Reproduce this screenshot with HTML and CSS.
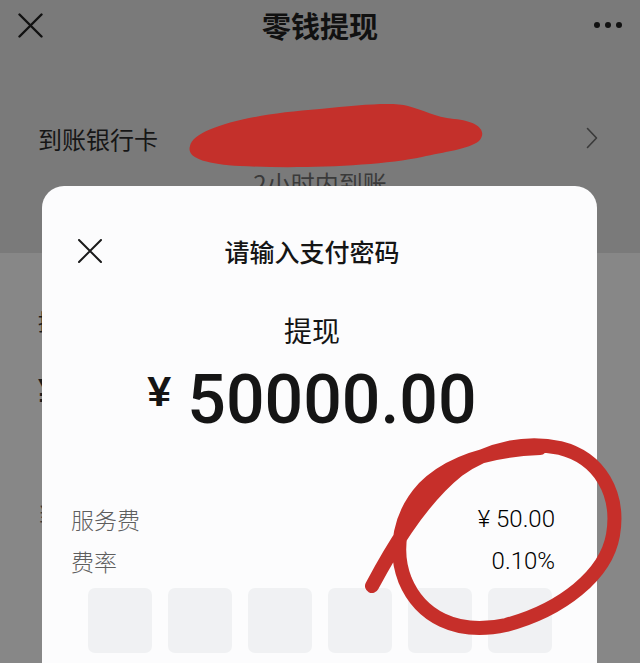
FILE: index.html
```html
<!DOCTYPE html>
<html lang="zh-CN">
<head>
<meta charset="utf-8">
<title>零钱提现</title>
<link rel="stylesheet" href="styles.css">
</head>
<body>
<div class="screen">
  <header class="nav">
    <svg class="nav-close" width="25" height="25" viewBox="0 0 25 25"><path d="M1.5 1.5 L23.5 23.5 M23.5 1.5 L1.5 23.5" stroke="#111" stroke-width="2.4" stroke-linecap="round" fill="none"/></svg>
    <h1 class="nav-title">零钱提现</h1>
    <svg class="nav-more" width="28" height="8" viewBox="0 0 28 8"><circle cx="3" cy="4" r="3" fill="#111"/><circle cx="14" cy="4" r="3" fill="#111"/><circle cx="25" cy="4" r="3" fill="#111"/></svg>
  </header>

  <section class="bank">
    <div class="bank-row">
      <span class="bank-label">到账银行卡</span>
      <svg class="bank-chevron" width="12" height="22" viewBox="0 0 12 22"><path d="M1.5 1.5 L10.5 11 L1.5 20.5" stroke="#3a3a3a" stroke-width="1.6" fill="none" stroke-linecap="round" stroke-linejoin="round"/></svg>
    </div>
    <div class="bank-eta">2小时内到账</div>
  </section>

  <section class="form">
    <div class="form-label">提</div>
    <div class="form-amount">¥</div>
    <div class="form-balance">当</div>
  </section>

  <div class="dialog">
    <div class="dialog-head">
      <svg class="dialog-close" width="24" height="24" viewBox="0 0 24 24"><path d="M1 1 L23 23 M23 1 L1 23" stroke="#1a1a1a" stroke-width="2" stroke-linecap="round" fill="none"/></svg>
      <div class="dialog-title">请输入支付密码</div>
      <span></span>
    </div>
    <div class="dialog-kind">提现</div>
    <div class="dialog-amount"><span class="dialog-yen">¥</span><span class="dialog-num">50000.00</span></div>
    <div class="fees">
      <div class="fee-row"><span class="fee-key">服务费</span><span class="fee-val">¥ 50.00</span></div>
      <div class="fee-row"><span class="fee-key">费率</span><span class="fee-val">0.10%</span></div>
    </div>
    <div class="pin">
      <div class="pin-box"></div><div class="pin-box"></div><div class="pin-box"></div>
      <div class="pin-box"></div><div class="pin-box"></div><div class="pin-box"></div>
    </div>
  </div>

  <svg class="marks" width="640" height="663" viewBox="0 0 640 663">
    <path d="M190 146 C194 128 250 114 320 109 C360 105 392 102 408 106 C424 110 434 117 454 119 C478 121 488 131 479 141 C469 149 444 152 422 157 C380 166 300 169 240 166 C206 164 186 158 190 146 Z" fill="#c4302b"/>
    <path d="M372 586 C388 556 418 502 458 470 C490 447 528 441 560 448 C600 458 620 494 613 535 C606 575 562 610 506 625 C456 636 420 616 405 580 C393 549 400 514 424 488 C450 462 490 450 540 448" stroke="#c62f2a" stroke-width="14" stroke-linecap="round" stroke-linejoin="round" fill="none"/>
  </svg>
</div>
</body>
</html>
```

FILE: styles.css
```css
html, body {
  margin: 0;
  padding: 0;
}
body {
  width: 640px;
  height: 663px;
  overflow: hidden;
  background: #7a7a7a;
  font-family: "Noto Sans CJK SC", "Noto Sans", sans-serif;
}
.screen {
  position: relative;
  width: 640px;
  height: 663px;
  display: flex;
  flex-direction: column;
  overflow: hidden;
}

/* top nav */
.nav {
  height: 50px;
  flex: none;
  display: grid;
  grid-template-columns: 1fr auto 1fr;
  align-items: center;
  padding: 0 18px;
}
.nav-close { justify-self: start; }
.nav-more { justify-self: end; }
.nav-title {
  margin: 0;
  font-size: 29px;
  font-weight: 700;
  line-height: 50px;
  color: #111;
}

/* bank row */
.bank {
  height: 203px;
  flex: none;
  box-sizing: border-box;
  padding-top: 63px;
}
.bank-row {
  height: 50px;
  display: flex;
  align-items: center;
  justify-content: space-between;
  padding: 0 42px 0 38px;
}
.bank-label {
  font-size: 24px;
  color: #161616;
}
.bank-eta {
  margin-top: 5px;
  text-align: center;
  font-size: 24px;
  line-height: 30px;
  color: #3a3a3a;
}

/* dimmed form under the dialog */
.form {
  flex: 1;
  background: #878787;
  color: #1c1c1c;
  padding: 52px 0 0 38px;
}
.form-label {
  font-size: 22px;
  line-height: 30px;
}
.form-amount {
  margin-top: 38px;
  font-family: "Liberation Sans", sans-serif;
  font-weight: 700;
  font-size: 40px;
  line-height: 40px;
}
.form-balance {
  margin-top: 86px;
  font-size: 20px;
  line-height: 30px;
  color: #3a3a3a;
}

/* dialog */
.dialog {
  position: absolute;
  left: 42px;
  top: 186px;
  width: 555px;
  height: 520px;
  background: #fcfcfd;
  border-radius: 22px 22px 0 0;
  display: flex;
  flex-direction: column;
}
.dialog-head {
  margin-top: 40px;
  height: 50px;
  display: grid;
  grid-template-columns: 1fr auto 1fr;
  align-items: center;
  padding: 0 51px 0 36px;
}
.dialog-title {
  font-size: 25px;
  font-weight: 500;
  color: #151515;
  line-height: 50px;
}
.dialog-kind {
  margin-top: 34px;
  padding-right: 15px;
  text-align: center;
  font-size: 28px;
  line-height: 40px;
  color: #151515;
}
.dialog-amount {
  margin-top: 10px;
  padding-right: 15px;
  height: 80px;
  display: flex;
  justify-content: center;
  align-items: flex-start;
  gap: 16px;
  color: #151515;
}
.dialog-yen {
  font-family: "Liberation Sans", sans-serif;
  font-weight: 700;
  font-size: 43px;
  line-height: 62px;
}
.dialog-num {
  font-family: Roboto, "Liberation Sans", sans-serif;
  font-weight: 500;
  font-size: 68px;
  line-height: 80px;
}
.fees {
  margin-top: 58px;
  padding: 0 42px 0 29px;
}
.fee-row {
  height: 42px;
  display: flex;
  align-items: center;
  justify-content: space-between;
}
.fee-key {
  font-size: 23px;
  font-weight: 300;
  color: #5e5e5e;
}
.fee-val {
  font-family: Roboto, "Liberation Sans", sans-serif;
  font-size: 24px;
  font-weight: 300;
  color: #000;
}
.pin {
  margin-top: 6px;
  padding-left: 46px;
  display: flex;
  gap: 16px;
}
.pin-box {
  width: 64px;
  height: 65px;
  border-radius: 7px;
  background: #f0f1f3;
}

/* red hand-drawn marks over the screenshot */
.marks {
  position: absolute;
  left: 0;
  top: 0;
  pointer-events: none;
}
```
